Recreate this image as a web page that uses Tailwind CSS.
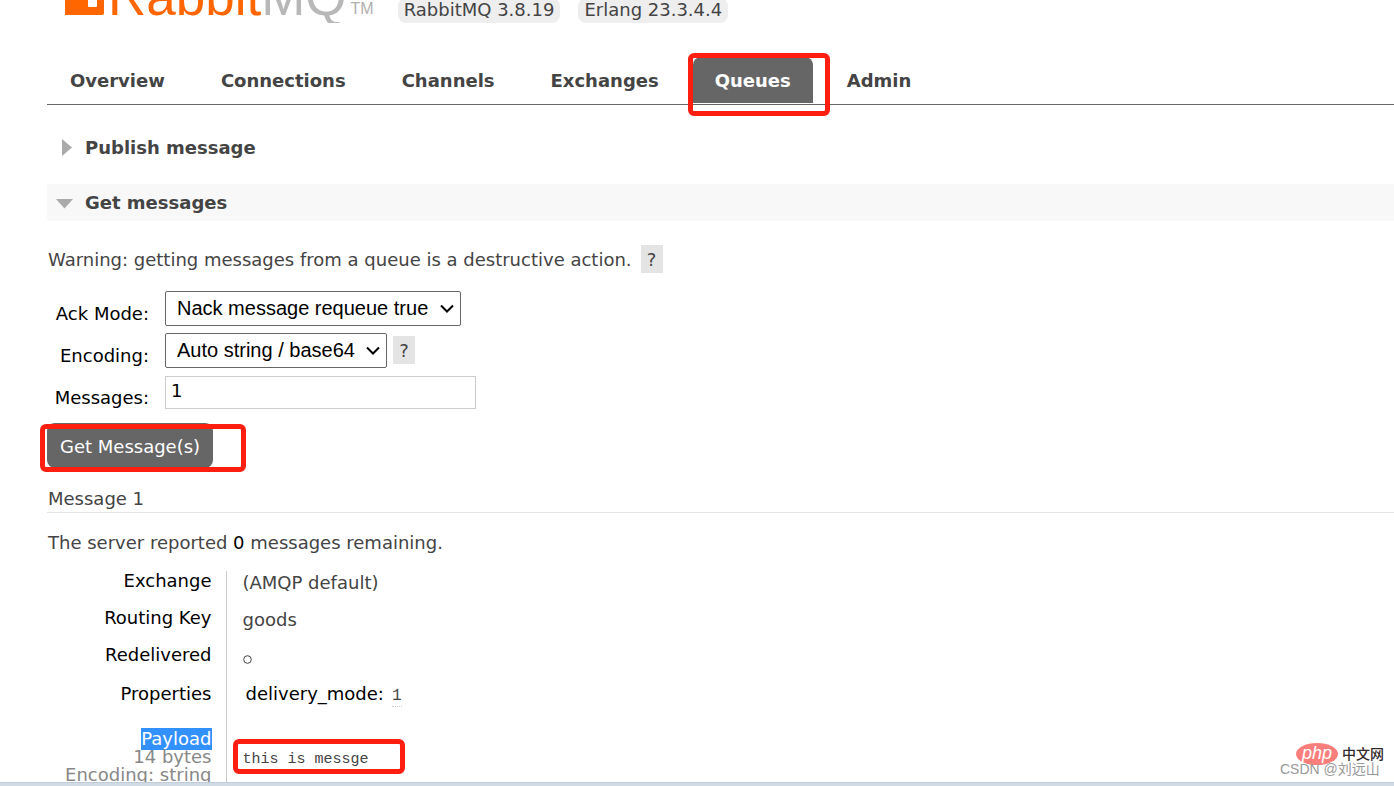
<!DOCTYPE html>
<html lang="en">
<head>
<meta charset="utf-8">
<meta name="viewport" content="width=device-width, initial-scale=1">
<title>RabbitMQ Management</title>
<script src="https://cdn.jsdelivr.net/npm/@tailwindcss/browser@4"></script>
</head>
<body class="relative flex h-screen flex-col overflow-hidden bg-white font-['DejaVu_Sans',sans-serif] text-[18px] leading-6 text-[#444]">
<div class="min-h-0 flex-1 overflow-hidden pl-[47px]">
  <header class="flex h-[23px] items-end overflow-hidden pl-[18px]">
    <a href="#" aria-label="RabbitMQ" class="flex shrink-0 items-end font-['Liberation_Sans',sans-serif]">
      <svg class="mb-2 h-[40px] w-[39px] shrink-0" viewBox="0 0 39 40" fill="#f60"><path fill-rule="evenodd" d="M0 2Q0 0 2 0H12Q14 0 14 2V16H22V2Q22 0 24 0H35Q37 0 37 2V16Q39 16 39 18V38Q39 40 37 40H0ZM24 24H31Q32 24 32 25V31Q32 32 31 32H24Q23 32 23 31V25Q23 24 24 24Z"/></svg>
      <span class="ml-1 text-[53px] leading-[52px] text-[#f60]">Rabbit</span><span class="text-[53px] leading-[52px] text-[#b8b8b8]">MQ</span>
      <span class="ml-1 text-[16px] leading-7 text-[#b0b0b0]">TM</span>
    </a>
    <ul class="ml-6 flex shrink-0 gap-[18px]">
      <li class="rounded-lg bg-[#eee] px-1.5 pb-px">RabbitMQ 3.8.19</li>
      <li class="rounded-lg bg-[#eee] px-1.5 pb-px">Erlang 23.3.4.4</li>
    </ul>
  </header>

  <nav class="mt-[34px] border-b border-[#666] pb-px">
    <ul class="flex gap-3 pl-px font-bold leading-[44px]">
      <li><a href="#" class="block px-[22px] pt-0.5">Overview</a></li>
      <li><a href="#" class="block px-[22px] pt-0.5">Connections</a></li>
      <li><a href="#" class="block px-[22px] pt-0.5">Channels</a></li>
      <li><a href="#" class="block px-[22px] pt-0.5">Exchanges</a></li>
      <li class="relative"><a href="#" class="block rounded-t-lg bg-[#666] px-[22px] pt-0.5 text-white">Queues</a>
        <span class="pointer-events-none absolute -top-1 -right-[17px] -bottom-[13px] -left-[5px] rounded-md border-5 border-[#ff1e10]"></span></li>
      <li><a href="#" class="block px-[22px] pt-0.5">Admin</a></li>
    </ul>
  </nav>

  <main>
    <h2 class="mt-6"><button type="button" class="flex h-[37px] w-full items-center font-bold"><span class="flex w-[38px] justify-center"><svg class="h-[18px] w-[18px]" viewBox="0 0 18 18" fill="#aaa"><path d="M5 0L15 8.5L5 17Z"/></svg></span>Publish message</button></h2>
    <h2 class="mt-[18px]"><button type="button" class="flex h-[37px] w-full items-center bg-[#f8f8f8] font-bold"><span class="flex w-[38px] pl-[9px]"><svg class="h-[18px] w-[18px]" viewBox="0 0 18 18" fill="#aaa"><path d="M0 5H17L8.5 14.5Z"/></svg></span>Get messages</button></h2>

    <p class="mt-6 flex items-center gap-[9px] pl-px"><span class="pt-0.5">Warning: getting messages from a queue is a destructive action.</span><button type="button" class="h-7 w-[22px] bg-[#e4e4e4] pt-0.5 text-center">?</button></p>

    <form>
      <table class="mt-3.5">
        <tr class="h-[42px]"><th class="w-[118px] pr-4 pt-3 text-right leading-5 font-normal text-black"><label for="ack">Ack Mode:</label></th><td><div class="relative w-[296px]"><select id="ack" class="block h-[35px] w-full appearance-none rounded-xs border border-[#666] bg-white px-[11px] font-['Liberation_Sans',sans-serif] text-[20px] text-black"><option>Nack message requeue true</option></select><svg class="pointer-events-none absolute top-3 right-1.5 h-3 w-4" viewBox="0 0 16 12" fill="none" stroke="#000" stroke-width="2"><path d="M2 2.5L8 8.5L14 2.5"/></svg></div></td></tr>
        <tr class="h-[42px]"><th class="pr-4 pt-3 text-right leading-5 font-normal text-black"><label for="enc">Encoding:</label></th><td><div class="flex items-center gap-1.5"><div class="relative w-[222px]"><select id="enc" class="block h-[35px] w-full appearance-none rounded-xs border border-[#666] bg-white px-[11px] font-['Liberation_Sans',sans-serif] text-[20px] text-black"><option>Auto string / base64</option></select><svg class="pointer-events-none absolute top-3 right-1.5 h-3 w-4" viewBox="0 0 16 12" fill="none" stroke="#000" stroke-width="2"><path d="M2 2.5L8 8.5L14 2.5"/></svg></div><button type="button" class="h-7 w-[22px] bg-[#e4e4e4] pt-0.5 text-center">?</button></div></td></tr>
        <tr class="h-[42px]"><th class="pr-4 pt-3 text-right leading-5 font-normal text-black"><label for="num">Messages:</label></th><td><input id="num" type="text" value="1" class="block h-[33px] w-[311px] border border-[#ccc] px-[5px] pb-1 text-black"></td></tr>
      </table>
      <div class="relative mt-2.5 w-fit">
        <button type="submit" class="block h-[45px] rounded-lg bg-[#666] px-[13px] pt-0.5 text-white">Get Message(s)</button>
        <span class="pointer-events-none absolute top-px -right-[33px] -bottom-1 -left-[7px] rounded-md border-5 border-[#ff1e10]"></span>
      </div>
    </form>

    <h3 class="mt-[19px] border-b border-[#e4e4e4] pb-px pl-px">Message 1</h3>
    <p class="mt-[18px] pl-px">The server reported <span class="text-black">0</span> messages remaining.</p>

    <table class="mt-4">
      <tr class="h-[37px] align-top"><th class="w-[179px] border-r border-[#ccc] pr-[14px] text-right font-normal leading-5 text-black">Exchange</th><td class="pl-4">(AMQP default)</td></tr>
      <tr class="h-[37px] align-top"><th class="border-r border-[#ccc] pr-[14px] text-right font-normal leading-5 text-black">Routing Key</th><td class="pl-4">goods</td></tr>
      <tr class="h-[37px] align-top"><th class="border-r border-[#ccc] pr-[14px] text-right font-normal leading-5 text-black">Redelivered</th><td class="pl-4"><svg class="mt-2.5 h-[9px] w-[9px]" viewBox="0 0 9 9" fill="none" stroke="#444"><circle cx="4.5" cy="4.5" r="3.8"/></svg></td></tr>
      <tr class="h-[46px] align-top"><th class="border-r border-[#ccc] pr-[14px] pt-0.5 text-right font-normal leading-5 text-black">Properties</th><td class="pl-[19px] pt-0.5 leading-5 text-black"><div class="flex gap-2">delivery_mode: <abbr class="mt-0.5 border-b border-dotted border-[#ccc] font-['Liberation_Mono',monospace] text-[16px] text-[#444] no-underline">1</abbr></div></td></tr>
      <tr class="align-top"><th class="border-r border-[#ccc] pr-[14px] text-right font-normal leading-[18px] text-[#888]"><div class="ml-auto w-fit bg-[#3390ff] leading-[22px] text-white">Payload</div><div class="-mt-0.5">14 bytes<br>Encoding: string</div></th><td class="pl-4 pt-[18px]"><div class="relative w-fit"><pre class="font-['Liberation_Mono',monospace] text-[15px] leading-7">this is messge</pre><span class="pointer-events-none absolute -top-[7px] -right-9 bottom-0 -left-2.5 rounded-md border-5 border-[#ff1e10]"></span></div></td></tr>
    </table>
  </main>
</div>
<div class="h-1 shrink-0 border-t border-[#c0ccd8] bg-[#d0dbe6]"></div>

<div class="absolute right-2.5 bottom-[9px] w-[104px] font-['Liberation_Sans','Noto_Sans_CJK_SC',sans-serif]">
  <div class="flex items-center justify-end gap-1 text-[14px] leading-[22px] text-[#332a2a]"><span class="h-[22px] w-[42px] rounded-[50%] bg-[#fa7f7c] text-center text-[18px] leading-5 text-white italic">php</span><span class="font-medium">中文网</span></div>
  <div class="-mt-1 text-[14px] leading-4 whitespace-nowrap text-[#999]">CSDN @刘远山</div>
</div>
</body>
</html>
